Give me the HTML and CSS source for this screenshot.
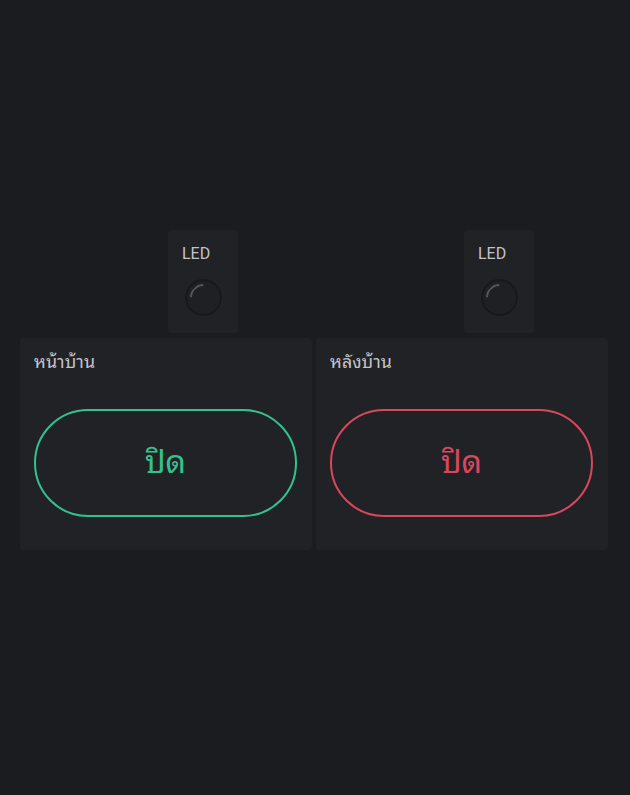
FILE: index.html
```html
<!DOCTYPE html>
<html lang="th">
<head>
<meta charset="utf-8">
<link rel="stylesheet" href="styles.css">
</head>
<body>
<div class="board">
  <div class="column">
    <div class="led-card">
      <div class="led-label">LED</div>
      <div class="led-lamp"></div>
    </div>
    <div class="switch-card">
      <div class="switch-title">หน้าบ้าน</div>
      <button class="pill pill-green">ปิด</button>
    </div>
  </div>
  <div class="column">
    <div class="led-card">
      <div class="led-label">LED</div>
      <div class="led-lamp"></div>
    </div>
    <div class="switch-card">
      <div class="switch-title">หลังบ้าน</div>
      <button class="pill pill-red">ปิด</button>
    </div>
  </div>
</div>
</body>
</html>
```

FILE: styles.css
```css
html, body {
  margin: 0;
  padding: 0;
  background: #1b1c20;
  height: 100%;
}
body {
  font-family: Roboto, "Noto Sans Thai Looped", "Loma", "Garuda", "Tlwg Typo", "Noto Sans Thai", "Noto Sans", "DejaVu Sans", sans-serif;
  color: #c9cacd;
}
.board {
  display: grid;
  grid-template-columns: 292px 292px;
  column-gap: 4px;
  padding: 230px 0 0 20px;
}
.column {
  display: flex;
  flex-direction: column;
  gap: 5px;
}
.led-card {
  margin-left: 148px;
  width: 70px;
  height: 103px;
  box-sizing: border-box;
  background: #212226;
  border-radius: 4px;
  padding: 14px 0 0 14px;
}
.led-label {
  font-size: 16px;
  line-height: 20px;
  color: #c3c4c8;
}
.led-lamp {
  margin: 15px 0 0 3px;
  width: 37px;
  height: 37px;
  box-sizing: border-box;
  border-radius: 50%;
  border: 2px solid #17181b;
  background: #1f2024;
  position: relative;
}
.led-lamp::after {
  content: "";
  position: absolute;
  inset: 3px;
  border-radius: 50%;
  border: 2px solid transparent;
  border-top-color: #55565b;
  transform: rotate(-45deg);
  clip-path: polygon(0 0, 100% 0, 50% 50%);
}
.switch-card {
  height: 212px;
  box-sizing: border-box;
  background: #212226;
  border-radius: 4px;
  padding: 12px 15px 0 14px;
}
.switch-title {
  font-size: 18px;
  line-height: 24px;
  color: #c3c4c8;
}
.pill {
  display: flex;
  align-items: center;
  justify-content: center;
  width: 263px;
  height: 108px;
  margin-top: 35px;
  box-sizing: border-box;
  border-radius: 54px;
  background: transparent;
  font-family: inherit;
  font-size: 32px;
  padding: 0 0 9px 0;
}
.pill-green {
  border: 2px solid #33c28e;
  color: #33c28e;
}
.pill-red {
  border: 2px solid #d9475f;
  color: #d9475f;
}
```
